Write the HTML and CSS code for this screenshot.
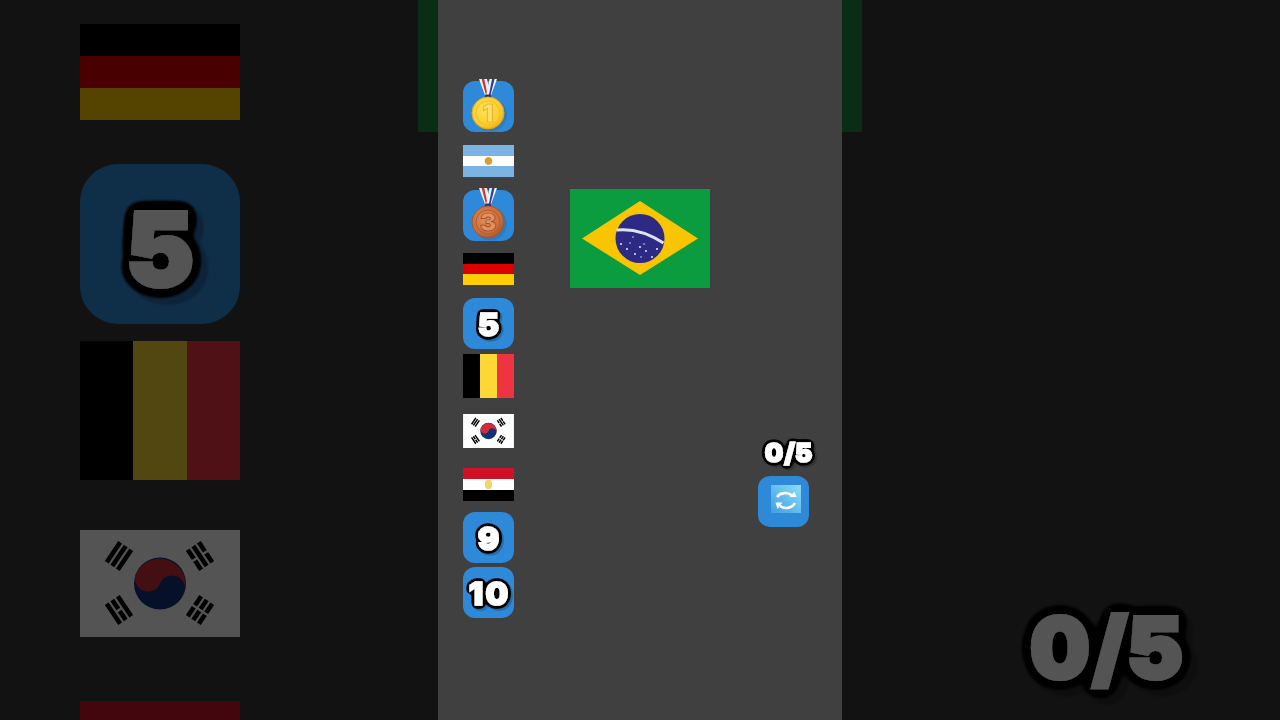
FILE: index.html
```html
<!DOCTYPE html>
<html lang="en">
<head>
<meta charset="utf-8">
<title>Flag quiz</title>
<link rel="stylesheet" href="styles.css">
</head>
<body>
<svg class="defs" aria-hidden="true">
  <defs>
    <filter id="outline-s" x="-40%" y="-40%" width="180%" height="180%">
      <feGaussianBlur in="SourceAlpha" stdDeviation="2.1" result="b"/>
      <feComponentTransfer in="b" result="t"><feFuncA type="linear" slope="14" intercept="-0.6"/></feComponentTransfer>
      <feFlood flood-color="#000"/>
      <feComposite in2="t" operator="in" result="o"/>
      <feOffset in="t" dx="2" dy="2" result="m"/>
      <feFlood flood-color="#000" flood-opacity=".2"/>
      <feComposite in2="m" operator="in" result="s"/>
      <feMerge><feMergeNode in="s"/><feMergeNode in="o"/><feMergeNode in="SourceGraphic"/></feMerge>
    </filter>
    <filter id="outline-l" x="-40%" y="-40%" width="180%" height="180%">
      <feGaussianBlur in="SourceAlpha" stdDeviation="7" result="b"/>
      <feComponentTransfer in="b" result="t"><feFuncA type="linear" slope="14" intercept="-0.6"/></feComponentTransfer>
      <feFlood flood-color="#000"/>
      <feComposite in2="t" operator="in" result="o"/>
      <feOffset in="t" dx="7" dy="7" result="m"/>
      <feFlood flood-color="#000" flood-opacity=".2"/>
      <feComposite in2="m" operator="in" result="s"/>
      <feMerge><feMergeNode in="s"/><feMergeNode in="o"/><feMergeNode in="SourceGraphic"/></feMerge>
    </filter>
    <radialGradient id="gold" cx="42%" cy="40%" r="65%">
      <stop offset="0" stop-color="#ffe45c"/><stop offset=".75" stop-color="#fbcd28"/><stop offset="1" stop-color="#eaa818"/>
    </radialGradient>
    <radialGradient id="bronze" cx="42%" cy="40%" r="65%">
      <stop offset="0" stop-color="#e38f58"/><stop offset=".75" stop-color="#c96a3a"/><stop offset="1" stop-color="#a04e26"/>
    </radialGradient>
    <linearGradient id="sky" x1="0" y1="1" x2="1" y2="0">
      <stop offset="0" stop-color="#3e9fe2"/><stop offset="1" stop-color="#8adcf8"/>
    </linearGradient>
    <symbol id="kr" viewBox="0 0 160 107">
      <rect width="160" height="107" fill="#fff"/>
      <circle cx="80" cy="53.5" r="26" fill="#12307a"/>
      <path d="M55.6 44.6A26 26 0 0 1 104.4 62.4A13 13 0 0 0 80 53.5A13 13 0 0 1 55.6 44.6Z" fill="#cd2e3a"/>
      <g stroke="#000" stroke-width="4.6" fill="none">
        <g transform="translate(39 26) rotate(-56)"><path d="M-12-6.7H12M-12 0H12M-12 6.7H12"/></g>
        <g transform="translate(120 26) rotate(56)"><path d="M-12-6.7H-1.2M1.2-6.7H12M-12 0H12M-12 6.7H-1.2M1.2 6.7H12"/></g>
        <g transform="translate(39 80) rotate(56)"><path d="M-12-6.7H12M-12 0H-1.2M1.2 0H12M-12 6.7H12"/></g>
        <g transform="translate(120 80) rotate(-56)"><path d="M-12-6.7H-1.2M1.2-6.7H12M-12 0H-1.2M1.2 0H12M-12 6.7H-1.2M1.2 6.7H12"/></g>
      </g>
    </symbol>
    <g id="ribbon">
      <path d="M16-2H24L28 17H23Z" fill="#f2f2f5"/>
      <path d="M18.6-2H21.2L25 16H23.5Z" fill="#cf2f2f"/>
      <path d="M34-2H26.5L22.5 17H27Z" fill="#f2f2f5"/>
      <path d="M31.6-2H29L25.5 16H27Z" fill="#2c3f94"/>
      <rect x="22" y="13.5" width="6" height="3.5" rx="1" fill="#27356f"/>
    </g>
  </defs>
</svg>

<main class="stage">
  <aside class="backdrop">
    <div class="flag flag-de big big-de"></div>
    <div class="badge badge-big"><span class="num num-big">5</span></div>
    <div class="flag flag-be big big-be"></div>
    <svg class="big-kr"><use href="#kr"/></svg>
    <div class="flag flag-eg big big-eg"></div>
  </aside>

  <section class="center">
    <div class="panel">
      <ol class="answers">
        <li class="slot">
          <svg class="medal" viewBox="0 -2 51 53">
            <rect y="0" width="51" height="51" rx="12" fill="#2e8ad8"/>
            <circle cx="27.5" cy="34" r="16.5" fill="#2a7cc4"/>
            <use href="#ribbon"/>
            <circle cx="25" cy="32" r="16" fill="url(#gold)" stroke="#e8a816" stroke-width="1"/>
            <circle cx="25" cy="32" r="12" fill="none" stroke="#f0b820" stroke-width=".8"/>
            <text x="25" y="41" class="medal-text gold-text">1</text>
          </svg>
        </li>
        <li class="slot"><div class="flag flag-ar"></div></li>
        <li class="slot">
          <svg class="medal" viewBox="0 -2 51 53">
            <rect y="0" width="51" height="51" rx="12" fill="#2e8ad8"/>
            <circle cx="27.5" cy="34" r="16.5" fill="#2a7cc4"/>
            <use href="#ribbon"/>
            <circle cx="25" cy="32" r="16" fill="url(#bronze)" stroke="#a9552b" stroke-width="1"/>
            <circle cx="25" cy="32" r="12" fill="none" stroke="#a9552b" stroke-width=".8"/>
            <text x="25" y="41" class="medal-text bronze-text">3</text>
          </svg>
        </li>
        <li class="slot"><div class="flag flag-de"></div></li>
        <li class="slot"><div class="badge"><span class="num">5</span></div></li>
        <li class="slot"><div class="flag flag-be"></div></li>
        <li class="slot"><svg class="flag-kr"><use href="#kr"/></svg></li>
        <li class="slot"><div class="flag flag-eg"></div></li>
        <li class="slot"><div class="badge"><span class="num">9</span></div></li>
        <li class="slot"><div class="badge"><span class="num num-wide">10</span></div></li>
      </ol>

      <svg class="brazil" viewBox="0 0 140 99">
        <rect width="140" height="99" fill="#0b9c40"/>
        <path d="M12 49.5 70 12 128 49.5 70 86Z" fill="#f8c500"/>
        <circle cx="70" cy="49.5" r="24.5" fill="#2c2a84"/>
        <path d="M46.5 41Q70 38.5 93.5 54" stroke="#dfe3ee" stroke-width="3" fill="none"/>
        <g fill="#fff">
          <circle cx="51" cy="55" r=".9"/><circle cx="57" cy="60" r=".9"/><circle cx="60" cy="54" r=".7"/>
          <circle cx="65" cy="65" r=".9"/><circle cx="70" cy="58" r=".9"/><circle cx="74" cy="55" r=".7"/>
          <circle cx="76" cy="62" r=".9"/><circle cx="82" cy="68" r=".9"/><circle cx="87" cy="60" r=".9"/>
          <circle cx="71" cy="68" r=".7"/><circle cx="63" cy="48" r=".7"/>
        </g>
      </svg>

      <div class="side">
        <span class="num num-count">0 /5</span>
        <svg class="reset" viewBox="0 0 51 51">
          <rect width="51" height="51" rx="12" fill="#2e8ad8"/>
          <rect x="13" y="9" width="30" height="28" fill="url(#sky)"/>
          <g fill="none" stroke="#fff" stroke-width="2.6">
            <path d="M19 21A9.5 8 0 0 1 34 19.5"/>
            <path d="M37 27A9.5 8 0 0 1 22 30"/>
          </g>
          <path d="M31.5 21H38.5L36.5 15.5Z M24.5 26.5H17.5L19.5 33Z" fill="#fff"/>
        </svg>
      </div>
    </div>
  </section>

  <aside class="score">
    <span class="num num-score">0 /5</span>
  </aside>
</main>
</body>
</html>
```

FILE: styles.css
```css
* { box-sizing: border-box; }

html, body {
  margin: 0;
  height: 720px;
  overflow: hidden;
  background: #121212;
}

.defs {
  display: block;
  width: 0;
  height: 0;
}

.stage {
  display: grid;
  grid-template-columns: 418px 444px 418px;
  height: 720px;
  overflow: hidden;
  font-family: "Inter", "DejaVu Sans", sans-serif;
}

/* centre */
.center {
  background: linear-gradient(#0a2d16, #0a2d16) top / 100% 132px no-repeat;
  padding: 0 20px;
  height: 720px;
}

.panel {
  display: flex;
  align-items: flex-start;
  background: #404040;
  height: 720px;
  padding-left: 25px;
}

.answers {
  list-style: none;
  margin: 0;
  padding: 79px 0 0;
  width: 51px;
  flex: none;
  display: flex;
  flex-direction: column;
}

.slot { display: block; }
.slot:nth-child(2) { margin-top: 13px; }
.slot:nth-child(3) { margin-top: 11px; }
.slot:nth-child(4) { margin-top: 12px; }
.slot:nth-child(5) { margin-top: 13px; }
.slot:nth-child(6) { margin-top: 5px; }
.slot:nth-child(7) { margin-top: 16px; }
.slot:nth-child(8) { margin-top: 20px; }
.slot:nth-child(9) { margin-top: 11px; }
.slot:nth-child(10) { margin-top: 4px; }

.medal { display: block; width: 51px; height: 53px; overflow: visible; }
.medal-text {
  font: 900 25px "Inter", sans-serif;
  text-anchor: middle;
  stroke-width: .7px;
}
.gold-text { fill: #fde06a; stroke: #e0a418; }
.bronze-text { fill: #e39062; stroke: #97491f; }

.flag { width: 51px; }
.flag-ar {
  height: 32px;
  background:
    radial-gradient(circle at 50% 50%, #d9a035 0 3.5px, transparent 4.2px),
    linear-gradient(#7bb3e4 33.33%, #fff 0 66.67%, #7bb3e4 0);
}
.flag-de {
  height: 32px;
  background: linear-gradient(#000 33.33%, #dd0000 0 66.67%, #ffce00 0);
}
.flag-be {
  height: 44px;
  background: linear-gradient(90deg, #000 33.33%, #fdd835 0 66.67%, #ef3340 0);
}
.flag-eg {
  height: 33px;
  background:
    radial-gradient(ellipse 4px 5px at 50% 50%, #f2d66b 0 90%, transparent 100%),
    linear-gradient(#ce1126 33.33%, #fff 0 66.67%, #000 0);
}
.flag-kr { display: block; width: 51px; height: 34px; }

.badge {
  display: flex;
  align-items: center;
  justify-content: center;
  width: 51px;
  height: 51px;
  padding-top: 3px;
  border-radius: 12px;
  background: #2e8ad8;
}

.num {
  color: #fff;
  font-weight: 900;
  line-height: 1;
  font-size: 32px;
  -webkit-text-stroke: 1.5px #fff;
  filter: url(#outline-s);
}
.num-wide { letter-spacing: 2.5px; margin-right: -2.5px; }

.brazil {
  display: block;
  flex: none;
  width: 140px;
  height: 99px;
  margin: 189px 0 0 56px;
}

.side {
  display: flex;
  flex-direction: column;
  align-items: center;
  margin: 440px 0 0 48px;
  width: 51px;
  flex: none;
}
.num-count {
  font-size: 26px;
  white-space: nowrap;
  word-spacing: -4px;
  margin: 0 -10px 0 0;
  height: 36px;
}
.reset { display: block; width: 51px; height: 51px; flex: none; }

/* dimmed copies on the sides */
.backdrop {
  display: flex;
  flex-direction: column;
  align-items: flex-start;
  padding: 24px 0 0 80px;
  height: 720px;
  overflow: hidden;
  filter: brightness(.33);
}

.flag.big { width: 160px; flex: none; }
.big-de.flag { height: 96px; }
.big-be.flag { height: 139px; margin-top: 17px; }
.big-kr { display: block; width: 160px; height: 107px; flex: none; margin-top: 50px; }
.big-eg.flag {
  height: 100px;
  margin-top: 64px;
  background: linear-gradient(#ce1126 33.33%, #fff 0 66.67%, #000 0);
}

.badge.badge-big {
  width: 160px;
  height: 160px;
  padding-top: 10px;
  border-radius: 38px;
  margin-top: 44px;
  flex: none;
}

.num.num-big {
  font-size: 102px;
  -webkit-text-stroke: 4px #fff;
  filter: url(#outline-l);
}

.score {
  filter: brightness(.33);
  padding: 606px 0 0 168px;
  height: 720px;
  overflow: hidden;
}
.num.num-score {
  display: inline-block;
  font-size: 84px;
  white-space: nowrap;
  word-spacing: -14px;
  -webkit-text-stroke: 4px #fff;
  filter: url(#outline-l);
}
```
